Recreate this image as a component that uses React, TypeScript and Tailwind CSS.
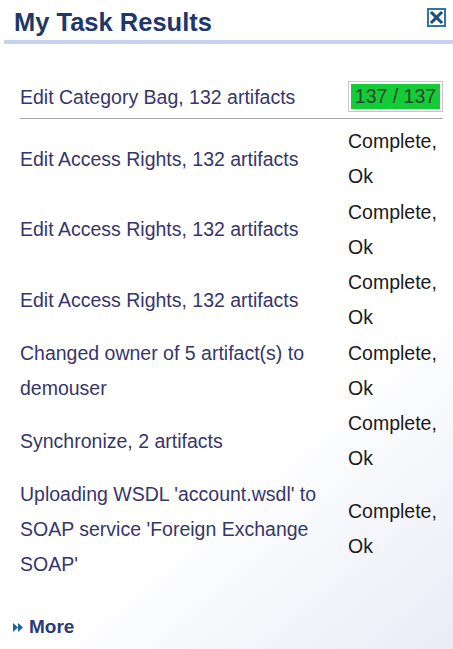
import React from "react";

type Task = { label: string[]; status: string[] };

const tasks: Task[] = [
  { label: ["Edit Access Rights, 132 artifacts"], status: ["Complete,", "Ok"] },
  { label: ["Edit Access Rights, 132 artifacts"], status: ["Complete,", "Ok"] },
  { label: ["Edit Access Rights, 132 artifacts"], status: ["Complete,", "Ok"] },
  { label: ["Changed owner of 5 artifact(s) to", "demouser"], status: ["Complete,", "Ok"] },
  { label: ["Synchronize, 2 artifacts"], status: ["Complete,", "Ok"] },
  {
    label: ["Uploading WSDL 'account.wsdl' to", "SOAP service 'Foreign Exchange", "SOAP'"],
    status: ["Complete,", "Ok"],
  },
];

function CloseIcon() {
  return (
    <svg width="19" height="19" viewBox="0 0 19 19">
      <rect x="1" y="1" width="17" height="17" fill="#ffffff" stroke="#2f73a8" strokeWidth="2" />
      <path d="M5 5 L14 14 M14 5 L5 14" stroke="#1c4c7a" strokeWidth="3" strokeLinecap="square" />
    </svg>
  );
}

function MoreArrows() {
  return (
    <svg width="10" height="9" viewBox="0 0 10 9">
      <path d="M0 0 L5 4.5 L0 9 Z" fill="#1a64a0" />
      <path d="M5 0 L10 4.5 L5 9 Z" fill="#1a64a0" />
    </svg>
  );
}

export default function App() {
  return (
    <div
      className="relative w-[453px] h-[649px] overflow-hidden bg-[linear-gradient(140deg,#ffffff_66%,#e9ecf6_100%)]"
      style={{ fontFamily: '"Liberation Sans", Arial, sans-serif' }}
    >
      <div className="flex items-start justify-between h-[40px] pl-[14px] pr-[7px] pt-[4px]">
        <h1 className="text-[25.5px] leading-[36px] font-bold text-[#1d3869]">My Task Results</h1>
        <div className="mt-[4px]">
          <CloseIcon />
        </div>
      </div>
      <div className="ml-[4px] h-[4px] bg-[#c6d2ee]" />

      <div className="ml-[20px] w-[423px]">
        <div className="flex items-center justify-between pt-[37px] pb-[6px] border-b border-[#a3a3a3]">
          <span className="text-[19.5px] leading-[24px] text-[#36366c]">Edit Category Bag, 132 artifacts</span>
          <div className="h-[31px] w-[95px] border border-[#c9c9c9] bg-white p-[2px]">
            <div className="h-full w-full bg-[#14cc36] flex items-center justify-center text-[19.5px] leading-none text-[#2a4433]">
              137 / 137
            </div>
          </div>
        </div>

        <div className="pt-[5px]">
          {tasks.map((t, i) => (
            <div key={i} className="flex text-[19.5px] leading-[35.25px]">
              <div className="w-[328px] pr-[8px] flex flex-col justify-center text-[#36366c]">
                {t.label.map((l, j) => (
                  <span key={j}>{l}</span>
                ))}
              </div>
              <div className="w-[95px] flex flex-col justify-center text-[#1a1a1a]">
                {t.status.map((s, j) => (
                  <span key={j}>{s}</span>
                ))}
              </div>
            </div>
          ))}
        </div>
      </div>

      <div className="flex items-center gap-[6px] pl-[13px] mt-[33px] h-[24px]">
        <MoreArrows />
        <span className="text-[19px] font-bold text-[#2b3a78]">More</span>
      </div>
    </div>
  );
}
